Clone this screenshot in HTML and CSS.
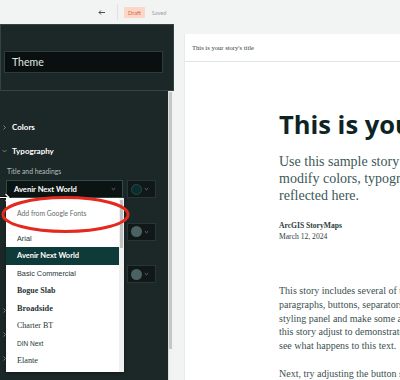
FILE: index.html
```html
<!DOCTYPE html>
<html lang="en">
<head>
    <meta charset="UTF-8">
    <meta name="viewport" content="width=device-width, initial-scale=1.0">
    <title>Story theme builder</title>
    <link rel="stylesheet" href="styles.css">
</head>
<body>
    <div class="topbar">
        <svg class="back" width="7" height="5" viewBox="0 0 7 5"><path d="M7 2.5H1M3 .5 1 2.5 3 4.5" fill="none" stroke="#4a4f4f" stroke-width="1"/></svg>
        <span class="divider"></span>
        <span class="badge-draft">Draft</span>
        <span class="saved">Saved</span>
    </div>

    <div class="main">
        <aside class="sidebar">
            <div class="sidebar-head">
                <div class="theme-input">Theme</div>
            </div>
            <div class="sidebar-body">
                <div class="sidebar-content">
                    <div class="section-row">
                        <svg class="chev" width="4" height="5" viewBox="0 0 4 5"><path d="M1 .5 3 2.5 1 4.5" fill="none" stroke="#8b9696" stroke-width=".8"/></svg>
                        Colors
                    </div>
                    <div class="section-row gap-top">
                        <svg class="chev" width="5" height="4" viewBox="0 0 5 4"><path d="M.5 1 2.5 3 4.5 1" fill="none" stroke="#8b9696" stroke-width=".8"/></svg>
                        Typography
                    </div>

                    <div class="field-group first">
                        <div class="field-label">Title and headings</div>
                        <div class="field-row">
                            <div class="font-select">
                                Avenir Next World
                                <svg class="select-chev" width="5" height="4" viewBox="0 0 5 4"><path d="M.8 1.2 2.5 2.8 4.2 1.2" fill="none" stroke="#8b9696" stroke-width=".7"/></svg>

                                <div class="font-list">
                                    <div class="font-options">
                                        <div class="google-option">Add from Google Fonts</div>
                                        <div class="font-option f-arial">Arial</div>
                                        <div class="font-option f-avenir selected">Avenir Next World</div>
                                        <div class="font-option f-basic">Basic Commercial</div>
                                        <div class="font-option f-bogue">Bogue Slab</div>
                                        <div class="font-option f-broadside">Broadside</div>
                                        <div class="font-option f-charter">Charter BT</div>
                                        <div class="font-option f-din">DIN Next</div>
                                        <div class="font-option f-elante">Elante</div>
                                    </div>
                                    <div class="list-scroll"><div class="list-thumb"></div></div>
                                </div>
                            </div>
                            <div class="color-btn">
                                <span class="swatch swatch-dark"></span>
                                <svg class="select-chev" width="5" height="4" viewBox="0 0 5 4"><path d="M.8 1.2 2.5 2.8 4.2 1.2" fill="none" stroke="#8b9696" stroke-width=".7"/></svg>
                            </div>
                        </div>
                    </div>

                    <!-- these rows sit under the open menu -->
                    <div class="field-group">
                        <div class="field-label"></div>
                        <div class="field-row">
                            <div class="font-select"></div>
                            <div class="color-btn">
                                <span class="swatch swatch-grey"></span>
                                <svg class="select-chev" width="5" height="4" viewBox="0 0 5 4"><path d="M.8 1.2 2.5 2.8 4.2 1.2" fill="none" stroke="#8b9696" stroke-width=".7"/></svg>
                            </div>
                        </div>
                    </div>

                    <div class="field-group">
                        <div class="field-label"></div>
                        <div class="field-row">
                            <div class="font-select"></div>
                            <div class="color-btn">
                                <span class="swatch swatch-grey"></span>
                                <svg class="select-chev" width="5" height="4" viewBox="0 0 5 4"><path d="M.8 1.2 2.5 2.8 4.2 1.2" fill="none" stroke="#8b9696" stroke-width=".7"/></svg>
                            </div>
                        </div>
                    </div>

                    <div class="section-row collapsed">
                        <svg class="chev" width="4" height="5" viewBox="0 0 4 5"><path d="M1 .5 3 2.5 1 4.5" fill="none" stroke="#8b9696" stroke-width=".8"/></svg>
                    </div>
                    <div class="section-row gap-top">
                        <svg class="chev" width="4" height="5" viewBox="0 0 4 5"><path d="M1 .5 3 2.5 1 4.5" fill="none" stroke="#8b9696" stroke-width=".8"/></svg>
                    </div>
                    <div class="section-row gap-top">
                        <svg class="chev" width="4" height="5" viewBox="0 0 4 5"><path d="M1 .5 3 2.5 1 4.5" fill="none" stroke="#8b9696" stroke-width=".8"/></svg>
                    </div>
                </div>
                <div class="side-scroll"><div class="side-thumb"></div></div>
            </div>
        </aside>

        <section class="preview">
            <div class="story-header">This is your story's title</div>
            <div class="story">
                <h1 class="story-title">This is your story's title</h1>
                <p class="lede">Use this sample story to preview your theme. As you<br>modify colors, typography, and other settings, the changes are<br>reflected here.</p>
                <div class="byline">
                    <div class="author">ArcGIS StoryMaps</div>
                    <div class="date">March 12, 2024</div>
                </div>
                <p class="body-text">This story includes several of the most common blocks, like<br>paragraphs, buttons, separators, and images. Open the theme<br>styling panel and make some adjustments, and watch how the blocks in<br>this story adjust to demonstrate your choices. Change the body font to<br>see what happens to this text.</p>
                <p class="body-text next">Next, try adjusting the button style in the theme panel.</p>
            </div>
        </section>
    </div>

    <!-- annotation drawn over the screenshot -->
    <svg class="pointer" width="12" height="11" viewBox="0 0 12 11">
        <path d="M-2 5.5H9M5.5 2 9 5.5 5.5 9" fill="none" stroke="#111" stroke-width="3"/>
        <path d="M-2 5.5H9M5.5 2 9 5.5 5.5 9" fill="none" stroke="#fff" stroke-width="1.2"/>
    </svg>
    <svg class="highlight" width="132" height="40" viewBox="0 0 132 40">
        <ellipse cx="65.5" cy="19.5" rx="62.5" ry="17" fill="none" stroke="#e4291f" stroke-width="3"/>
    </svg>
</body>
</html>
```

FILE: styles.css
```css
* {
    box-sizing: border-box;
}
body {
    margin: 0;
    width: 400px;
    height: 380px;
    overflow: hidden;
    position: relative;
    background: #f2f3f3;
    font-family: Lato, "Open Sans", sans-serif;
}

/* top bar */
.topbar {
    height: 24px;
    display: flex;
    align-items: center;
    padding-left: 98px;
    font-size: 5.6px;
}
.back {
    display: block;
}
.divider {
    width: 1px;
    height: 16px;
    background: #dfe1e1;
    margin: 0 6px 0 12px;
}
.badge-draft {
    background: #fcd6c6;
    color: #d4653f;
    height: 11px;
    line-height: 11px;
    padding: 0 4px;
    border-radius: 1px;
}
.saved {
    color: #9ba2a2;
    margin-left: 7px;
}

.main {
    display: flex;
    height: 356px;
}

/* sidebar */
.sidebar {
    width: 174px;
    background: #1c2727;
    display: flex;
    flex-direction: column;
}
.sidebar-head {
    height: 67px;
    border: 1px solid #364343;
    padding: 26px 10px 0 3px;
}
.theme-input {
    height: 22px;
    background: #0a1010;
    border: 1px solid #2f3b3b;
    color: #e1e6e6;
    font-size: 10.5px;
    line-height: 20px;
    padding-left: 7px;
}
.sidebar-body {
    flex: 1;
    display: flex;
    min-height: 0;
}
.sidebar-content {
    flex: 1;
    padding-top: 28px;
}
.side-scroll {
    width: 6px;
    background: #f1f2f2;
    border-left: 1px solid #dcdede;
    padding: 1px 2px 0 0;
}
.side-thumb {
    width: 3px;
    height: 257px;
    background: #c5c7c7;
}

.section-row {
    height: 16px;
    display: flex;
    align-items: center;
    color: #ffffff;
    font-weight: 700;
    font-size: 8px;
}
.section-row.gap-top {
    margin-top: 8px;
}
.section-row.collapsed {
    margin-top: 19px;
}
.chev {
    width: 5px;
    margin: 0 5px 0 2px;
}

.field-group {
    margin-top: 9.5px;
}
.field-group.first {
    margin-top: 6px;
}
.field-label {
    height: 12px;
    line-height: 12px;
    padding-left: 7px;
    color: #b3bdbc;
    font-size: 6.8px;
}
.field-row {
    display: flex;
    gap: 4px;
    height: 18px;
    margin: 3px 0 0 6px;
}
.font-select {
    position: relative;
    width: 117px;
    display: flex;
    align-items: center;
    padding-left: 7px;
    background: #0c1313;
    border: 1px solid #2e4c4a;
    color: #ffffff;
    font-weight: 700;
    font-size: 7.6px;
}
.select-chev {
    margin-left: auto;
    margin-right: 6px;
}
.color-btn {
    width: 29px;
    display: flex;
    align-items: center;
    padding-left: 3px;
    background: #101818;
    border: 1px solid #293434;
}
.swatch {
    width: 11px;
    height: 11px;
    border-radius: 50%;
}
.swatch-dark {
    background: #0a2e2e;
    border: 1px solid #27494a;
}
.swatch-grey {
    background: #4a6262;
}

/* open font menu */
.font-list {
    position: absolute;
    top: 17px;
    left: -1px;
    width: 118px;
    height: 174px;
    display: flex;
    background: #ffffff;
    box-shadow: 0 1px 3px rgba(0, 0, 0, 0.35);
    font-weight: 400;
    z-index: 2;
}
.font-options {
    flex: 1;
}
.list-scroll {
    width: 5px;
    background: #f1f1f1;
    padding: 2px 1px 0 1px;
}
.list-thumb {
    height: 48px;
    background: #c1c1c1;
}
.google-option {
    height: 31.5px;
    line-height: 31.5px;
    padding-left: 11px;
    color: #656c6c;
    font-size: 6.8px;
}
.font-option {
    height: 17.5px;
    line-height: 17.5px;
    padding-left: 11px;
    color: #263535;
    font-size: 7.3px;
    white-space: nowrap;
}
.font-option.selected {
    background: #0f3a3a;
    color: #ffffff;
    font-weight: 700;
}
.f-arial,
.f-basic {
    font-family: "Liberation Sans", sans-serif;
}
.f-avenir {
    font-family: Lato, sans-serif;
    font-size: 7.5px;
}
.f-bogue {
    font-family: "Liberation Serif", serif;
    font-weight: 700;
    font-size: 8px;
}
.f-broadside {
    font-family: "Liberation Serif", serif;
    font-weight: 700;
    font-size: 8.3px;
}
.f-charter {
    font-family: "Liberation Serif", serif;
    font-size: 8px;
}
.f-din {
    font-family: "Liberation Sans", sans-serif;
    font-size: 6.5px;
}
.f-elante {
    font-family: "Liberation Serif", serif;
    font-size: 8.2px;
}

/* story preview */
.preview {
    flex: 1;
    margin: 10px 0 0 10px;
    background: #ffffff;
    border-left: 1px solid #e6eaea;
    overflow: hidden;
}
.story-header {
    height: 28px;
    line-height: 28px;
    padding-left: 7px;
    border-bottom: 1px solid #dfe6e6;
    font-family: "Liberation Serif", serif;
    font-size: 6.6px;
    color: #333d3d;
}
.story {
    padding: 47px 0 0 94px;
    white-space: nowrap;
}
.story-title {
    margin: 0;
    font-family: "Open Sans", sans-serif;
    font-weight: 700;
    font-size: 25.5px;
    line-height: 30px;
    color: #0d2424;
}
.lede {
    margin: 14px 0 0;
    font-family: "Liberation Serif", serif;
    font-size: 14px;
    line-height: 17px;
    color: #3c5757;
}
.byline {
    margin-top: 16px;
    font-family: "Liberation Serif", serif;
    font-size: 7.6px;
    line-height: 11px;
    color: #2c3c3c;
}
.author {
    font-weight: 700;
}
.body-text {
    margin: 42px 0 0;
    font-family: "Liberation Serif", serif;
    font-size: 10px;
    line-height: 13.75px;
    color: #3b5050;
}
.body-text.next {
    margin-top: 14px;
}

/* overlays */
.pointer {
    position: absolute;
    left: 0;
    top: 192px;
}
.highlight {
    position: absolute;
    left: 0;
    top: 195px;
    z-index: 3;
}
```
